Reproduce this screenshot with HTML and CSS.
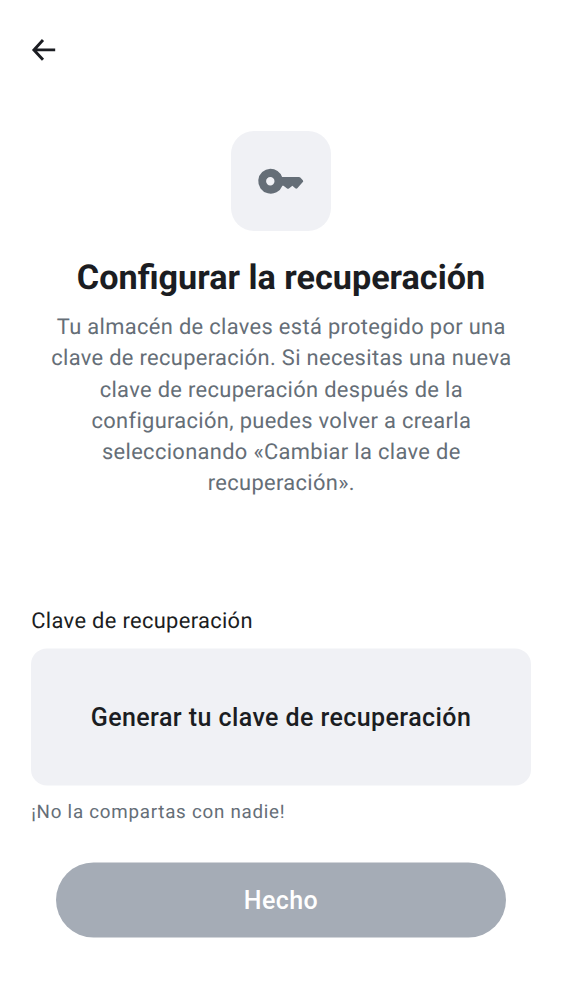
FILE: index.html
```html
<!DOCTYPE html>
<html lang="es">
<head>
<meta charset="utf-8">
<title>Configurar la recuperación</title>
<link rel="stylesheet" href="styles.css">
</head>
<body>
<main class="screen">
  <header class="topbar">
    <svg class="back" viewBox="0 0 31 31" aria-label="Atrás"><path d="M27.2 15.9H6.5M15 5.9 5.9 15.9l9.1 9.9" fill="none" stroke="currentColor" stroke-width="2.9"/></svg>
  </header>
  <section class="intro">
    <div class="tile">
      <svg class="key" viewBox="0 0 50 50"><path fill="currentColor" fill-rule="evenodd" d="M14.3 12.7a12.5 12.5 0 0 1 11.8 8.3h16.9c.5 0 .9.2 1.3.5l2.5 2.8c.5.5.5 1.3 0 1.8l-5.5 6.1c-.6.6-1.4.6-2 .1l-2.9-2.6-3.5 2.7c-.6.4-1.2.4-1.8 0l-3.6-2.7h-1.1a12.5 12.5 0 1 1-12.1-17M14.3 29.4a4.2 4.2 0 1 0 0-8.4 4.2 4.2 0 0 0 0 8.4"/></svg>
    </div>
    <h1 class="title">Configurar la recuperación</h1>
    <p class="text">Tu almacén de claves está protegido por una<br>clave de recuperación. Si necesitas una nueva<br>clave de recuperación después de la<br>configuración, puedes volver a crearla<br>seleccionando «Cambiar la clave de<br>recuperación».</p>
  </section>
  <section class="field">
    <div class="label">Clave de recuperación</div>
    <button class="generate">Generar tu clave de recuperación</button>
    <div class="hint">¡No la compartas con nadie!</div>
  </section>
  <button class="done">Hecho</button>
</main>
</body>
</html>
```
FILE: styles.css
```css
body {
  margin: 0;
  background: #fff;
  color: #1b1d22;
  font-family: Roboto, sans-serif;
  text-rendering: geometricPrecision;
}
.screen {
  box-sizing: border-box;
  height: 1000px;
  padding: 34px 31px 0;
  display: flex;
  flex-direction: column;
}
.topbar {
  height: 97px;
  margin-left: -3px;
}
.back {
  display: block;
  width: 31px;
  height: 31px;
}
.intro {
  display: flex;
  flex-direction: column;
  align-items: center;
  height: 474px;
  text-align: center;
}
.tile {
  display: flex;
  align-items: center;
  justify-content: center;
  width: 100px;
  height: 100px;
  border-radius: 23px;
  background: #f0f1f5;
  color: #656e77;
}
.key {
  width: 50px;
  height: 50px;
}
.title {
  margin: 25.5px 0 13.6px;
  font-size: 34.2px;
  line-height: 42px;
  font-weight: 700;
  white-space: nowrap;
}
.text {
  margin: 0;
  padding-left: 0.6px;
  font-size: 21.875px;
  line-height: 31.25px;
  letter-spacing: 0.34px;
  color: #656e77;
  white-space: nowrap;
}
.field {
  display: flex;
  flex-direction: column;
}
.label {
  padding: 1px 0 0 0.3px;
  font-size: 21.875px;
  line-height: 32px;
  letter-spacing: 0.34px;
  margin-bottom: 10px;
}
.generate {
  height: 137.4px;
  padding: 1px 0 0;
  border: 0;
  border-radius: 16px;
  background: #f0f1f5;
  color: #1b1d22;
  font: 500 25px/37px Roboto, sans-serif;
  letter-spacing: 0.42px;
  transform: translateY(0.4px);
}
.hint {
  margin-top: 13.6px;
  padding-left: 0.3px;
  font-size: 18.75px;
  line-height: 27px;
  letter-spacing: 0.75px;
  color: #656e77;
}
.done {
  height: 75px;
  margin: 36px 25px 0;
  padding: 0;
  border: 0;
  border-radius: 38px;
  background: #a5acb6;
  color: #fff;
  font: 500 25px/37px Roboto, sans-serif;
  letter-spacing: 0.4px;
  transform: translateY(0.5px);
}
```
